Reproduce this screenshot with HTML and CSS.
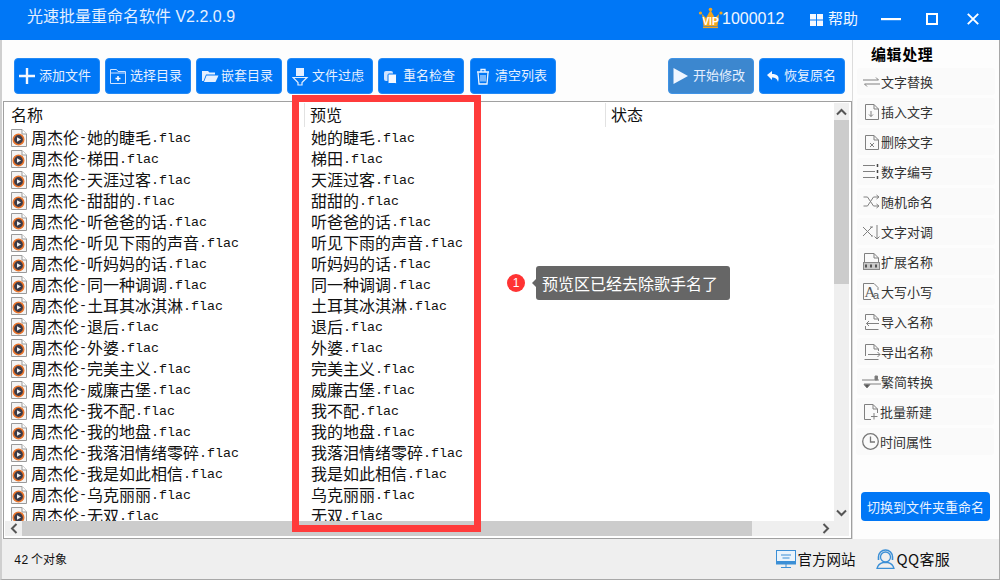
FILE: index.html
```html
<!DOCTYPE html>
<html lang="zh-CN">
<head>
<meta charset="utf-8">
<title>光速批量重命名软件</title>
<link rel="stylesheet" href="styles.css">
</head>
<body>
<svg class="defs" width="0" height="0">
  <symbol id="flac" viewBox="0 0 16 18">
    <path d="M.5.5H11L15.5 5V17.5H.5Z" fill="#f4f4f4" stroke="#9a9a9a"/>
    <path d="M11 .5V5H15.5" fill="#fff" stroke="#9a9a9a"/>
    <circle cx="7.5" cy="10.5" r="5.2" fill="#3a3a48" stroke="#e8742c" stroke-width="1.6"/>
    <path d="M6 8.2L10 10.5L6 12.8Z" fill="#f2f2f2"/>
  </symbol>
</svg>
<div class="win">
  <header class="titlebar">
    <div class="apptitle">光速批量重命名软件 V2.2.0.9</div>
    <svg class="crown" width="25" height="22" viewBox="0 0 25 22">
      <path d="M4 7L8 11L12.5 3L17 11L21 7L19.5 19H5.5Z" fill="#f2a51f"/>
      <circle cx="2.500" cy="6" r="1.600" fill="#f2a51f"/><circle cx="12.500" cy="2.500" r="1.800" fill="#f2a51f"/><circle cx="23" cy="6" r="1.600" fill="#f2a51f"/>
      <rect x="5" y="19.500" width="15" height="1.600" fill="#f2a51f"/>
      <text x="12.500" y="18" text-anchor="middle" class="viptext">VIP</text>
    </svg>
    <span class="uid">1000012</span>
    <svg class="gridicon" width="13" height="13" viewBox="0 0 13 13" fill="#f4f8ff"><rect width="6" height="5.500"/><rect x="7" width="6" height="5.500"/><rect y="6.500" width="6" height="5.500"/><rect x="7" y="6.500" width="6" height="5.500"/></svg>
    <span class="help">帮助</span>
    <svg class="winbtn minb" width="20" height="4" viewBox="0 0 20 4"><rect y="1" width="20" height="2.200" fill="#fff"/></svg>
    <svg class="winbtn maxb" width="12" height="12" viewBox="0 0 12 12"><rect x="1" y="1" width="10" height="10" fill="none" stroke="#fff" stroke-width="2"/></svg>
    <svg class="winbtn clsb" width="12" height="12" viewBox="0 0 12 12"><path d="M.8.8L11.200 11.200M11.200.8L.8 11.200" stroke="#fff" stroke-width="1.900"/></svg>
  </header>

  <div class="body">
    <div class="main">
      <div class="leftcol">
        <div class="toolbar">
          <button class="tbtn"><svg width="20" height="20" viewBox="0 0 20 20"><path d="M8 2V18M0 10H16" stroke="#f4f8ff" stroke-width="2.400"/></svg>添加文件</button>
          <button class="tbtn"><svg width="20" height="20" viewBox="0 0 20 20" fill="none" stroke="#cfe3ff"><g transform="translate(-2 0)"><path d="M2.500 17.500V3.500H8.500L10 5.500H17.500V17.500Z"/><path d="M2.500 7H17.500"/><path d="M10 10V15M7.500 12.500H12.500" stroke="#fff" stroke-width="1.500"/></g></svg>选择目录</button>
          <button class="tbtn"><svg width="20" height="20" viewBox="0 0 20 20"><g transform="translate(-1 0)"><path d="M2 5H8L9.500 6.500H15V8.500H6L3.500 15H2Z" fill="#e6f0ff"/><path d="M6.500 9.500H18.500L15.500 16H4Z" fill="#e6f0ff"/></g></svg>嵌套目录</button>
          <button class="tbtn"><svg width="20" height="20" viewBox="0 0 20 20"><g transform="translate(-2 0)"><rect x="6" y="2" width="8" height="8" fill="#e6f0ff"/><path d="M3 11.500H17L12 16.500V19H8V16.500Z" fill="none" stroke="#e6f0ff" stroke-width="1.200"/></g></svg>文件过虑</button>
          <button class="tbtn"><svg width="20" height="20" viewBox="0 0 20 20"><g transform="translate(-3 0)"><rect x="4" y="5" width="9" height="10" rx="2" fill="#cfe3ff"/><rect x="8" y="8" width="8.500" height="9.500" rx="1" fill="#f4f8ff" stroke="#0077f6"/></g></svg>重名检查</button>
          <button class="tbtn lastleft"><svg width="20" height="20" viewBox="0 0 20 20" fill="none" stroke="#f0f6ff" stroke-width="1.300"><g transform="translate(-2 0)"><path d="M4 6H16M8 6V3.500H12V6"/><path d="M5 6.500L6 18H14L15 6.500"/><path d="M8 9V15.500M10 9V15.500M12 9V15.500" stroke-width="1"/></g></svg>清空列表</button>
          <button class="tbtn startbtn"><svg width="20" height="20" viewBox="0 0 20 20"><path d="M.5 2L15 10L.5 18Z" fill="#f0f6ff"/></svg>开始修改</button>
          <button class="tbtn"><svg width="20" height="20" viewBox="0 0 20 20"><path d="M3 9L8 5V8C13 8 16 10 14 16C13 12.500 11 11.500 8 11.500V14Z" fill="#f4f8ff"/></svg>恢复原名</button>
        </div>

        <div class="list">
          <div class="listtop">
            <div class="table">
              <div class="thead">
                <div class="th thname">名称</div>
                <div class="th thprev">预览</div>
                <div class="th thstate">状态</div>
              </div>
              <div class="rows">
                <div class="row"><div class="cname"><svg class="ficon" width="16" height="18"><use href="#flac"/></svg>周杰伦<span class="hy">-</span>她的睫毛<span class="ext">.flac</span></div><div class="cprev">她的睫毛<span class="ext">.flac</span></div></div>
                <div class="row"><div class="cname"><svg class="ficon" width="16" height="18"><use href="#flac"/></svg>周杰伦<span class="hy">-</span>梯田<span class="ext">.flac</span></div><div class="cprev">梯田<span class="ext">.flac</span></div></div>
                <div class="row"><div class="cname"><svg class="ficon" width="16" height="18"><use href="#flac"/></svg>周杰伦<span class="hy">-</span>天涯过客<span class="ext">.flac</span></div><div class="cprev">天涯过客<span class="ext">.flac</span></div></div>
                <div class="row"><div class="cname"><svg class="ficon" width="16" height="18"><use href="#flac"/></svg>周杰伦<span class="hy">-</span>甜甜的<span class="ext">.flac</span></div><div class="cprev">甜甜的<span class="ext">.flac</span></div></div>
                <div class="row"><div class="cname"><svg class="ficon" width="16" height="18"><use href="#flac"/></svg>周杰伦<span class="hy">-</span>听爸爸的话<span class="ext">.flac</span></div><div class="cprev">听爸爸的话<span class="ext">.flac</span></div></div>
                <div class="row"><div class="cname"><svg class="ficon" width="16" height="18"><use href="#flac"/></svg>周杰伦<span class="hy">-</span>听见下雨的声音<span class="ext">.flac</span></div><div class="cprev">听见下雨的声音<span class="ext">.flac</span></div></div>
                <div class="row"><div class="cname"><svg class="ficon" width="16" height="18"><use href="#flac"/></svg>周杰伦<span class="hy">-</span>听妈妈的话<span class="ext">.flac</span></div><div class="cprev">听妈妈的话<span class="ext">.flac</span></div></div>
                <div class="row"><div class="cname"><svg class="ficon" width="16" height="18"><use href="#flac"/></svg>周杰伦<span class="hy">-</span>同一种调调<span class="ext">.flac</span></div><div class="cprev">同一种调调<span class="ext">.flac</span></div></div>
                <div class="row"><div class="cname"><svg class="ficon" width="16" height="18"><use href="#flac"/></svg>周杰伦<span class="hy">-</span>土耳其冰淇淋<span class="ext">.flac</span></div><div class="cprev">土耳其冰淇淋<span class="ext">.flac</span></div></div>
                <div class="row"><div class="cname"><svg class="ficon" width="16" height="18"><use href="#flac"/></svg>周杰伦<span class="hy">-</span>退后<span class="ext">.flac</span></div><div class="cprev">退后<span class="ext">.flac</span></div></div>
                <div class="row"><div class="cname"><svg class="ficon" width="16" height="18"><use href="#flac"/></svg>周杰伦<span class="hy">-</span>外婆<span class="ext">.flac</span></div><div class="cprev">外婆<span class="ext">.flac</span></div></div>
                <div class="row"><div class="cname"><svg class="ficon" width="16" height="18"><use href="#flac"/></svg>周杰伦<span class="hy">-</span>完美主义<span class="ext">.flac</span></div><div class="cprev">完美主义<span class="ext">.flac</span></div></div>
                <div class="row"><div class="cname"><svg class="ficon" width="16" height="18"><use href="#flac"/></svg>周杰伦<span class="hy">-</span>威廉古堡<span class="ext">.flac</span></div><div class="cprev">威廉古堡<span class="ext">.flac</span></div></div>
                <div class="row"><div class="cname"><svg class="ficon" width="16" height="18"><use href="#flac"/></svg>周杰伦<span class="hy">-</span>我不配<span class="ext">.flac</span></div><div class="cprev">我不配<span class="ext">.flac</span></div></div>
                <div class="row"><div class="cname"><svg class="ficon" width="16" height="18"><use href="#flac"/></svg>周杰伦<span class="hy">-</span>我的地盘<span class="ext">.flac</span></div><div class="cprev">我的地盘<span class="ext">.flac</span></div></div>
                <div class="row"><div class="cname"><svg class="ficon" width="16" height="18"><use href="#flac"/></svg>周杰伦<span class="hy">-</span>我落泪情绪零碎<span class="ext">.flac</span></div><div class="cprev">我落泪情绪零碎<span class="ext">.flac</span></div></div>
                <div class="row"><div class="cname"><svg class="ficon" width="16" height="18"><use href="#flac"/></svg>周杰伦<span class="hy">-</span>我是如此相信<span class="ext">.flac</span></div><div class="cprev">我是如此相信<span class="ext">.flac</span></div></div>
                <div class="row"><div class="cname"><svg class="ficon" width="16" height="18"><use href="#flac"/></svg>周杰伦<span class="hy">-</span>乌克丽丽<span class="ext">.flac</span></div><div class="cprev">乌克丽丽<span class="ext">.flac</span></div></div>
                <div class="row"><div class="cname"><svg class="ficon" width="16" height="18"><use href="#flac"/></svg>周杰伦<span class="hy">-</span>无双<span class="ext">.flac</span></div><div class="cprev">无双<span class="ext">.flac</span></div></div>
              </div>
            </div>
            <div class="vbar">
              <div class="sbtn"><svg width="11" height="8" viewBox="0 0 11 8"><path d="M1 6.500L5.500 2L10 6.500" fill="none" stroke="#555" stroke-width="2"/></svg></div>
              <div class="vthumb"></div>
              <div class="vtrack"></div>
              <div class="sbtn"><svg width="11" height="8" viewBox="0 0 11 8"><path d="M1 1.500L5.500 6L10 1.500" fill="none" stroke="#555" stroke-width="2"/></svg></div>
            </div>
          </div>
          <div class="hbar">
            <div class="hbtn"><svg width="8" height="11" viewBox="0 0 8 11"><path d="M6.500 1L2 5.500L6.500 10" fill="none" stroke="#555" stroke-width="2"/></svg></div>
            <div class="hthumb"></div>
            <div class="htrack"></div>
            <div class="hbtn"><svg width="8" height="11" viewBox="0 0 8 11"><path d="M1.500 1L6 5.500L1.500 10" fill="none" stroke="#555" stroke-width="2"/></svg></div>
            <div class="hcorner"></div>
          </div>
        </div>
      </div>

      <aside class="side">
        <div class="sidetitle">编辑处理</div>
        <div class="sitem"><svg width="19" height="19" viewBox="0 0 19 19" class="sic"><path d="M1 8H16.500L14 5.500M18 12H2.500L5 14.500" /></svg>文字替换</div>
        <div class="sitem"><svg width="19" height="19" viewBox="0 0 19 19" class="sic"><path d="M3.500 2.500H12L16.500 7V17.500H3.500Z"/><path d="M12 2.500V7H16.500"/><path d="M9 9V14.500M7 12.500L9 14.500L11 12.500"/></svg>插入文字</div>
        <div class="sitem"><svg width="19" height="19" viewBox="0 0 19 19" class="sic"><path d="M3.500 3.500H12L16.500 8V17.500H3.500Z"/><path d="M12 3.500V8H16.500"/><path d="M8 11L12 15M12 11L8 15"/></svg>删除文字</div>
        <div class="sitem"><svg width="19" height="19" viewBox="0 0 19 19" class="sic"><path d="M1 3.500H13M1 9.500H13M1 15.500H13"/><path d="M15.500 2V5M15.500 8V11M15.500 14V17" stroke="#444" stroke-width="1.500"/></svg>数字编号</div>
        <div class="sitem"><svg width="19" height="19" viewBox="0 0 19 19" class="sic"><path d="M1.500 5H5.500L11.500 14H16.500M1.500 14H5.500L11.500 5H16.500"/><path d="M14.500 3L17 5L14.500 7M14.500 12L17 14L14.500 16"/></svg>随机命名</div>
        <div class="sitem"><svg width="19" height="19" viewBox="0 0 19 19" class="sic"><path d="M1 5L10 14M1 14L10 5"/><path d="M8 5H11M9 14H11"/><path d="M15 3V17M12.500 14.500L15 17L17.500 14.500"/></svg>文字对调</div>
        <div class="sitem"><svg width="19" height="19" viewBox="0 0 19 19" class="sic"><path d="M2.500 1.500H12L16.500 6V17.500H2.500Z"/><path d="M12 1.500V6H16.500"/><rect x="1.500" y="10.500" width="16" height="7" fill="#c9c9c9" stroke="#888"/><path d="M4 12.500V15.500M9 12.500V15.500M14 12.500V15.500" stroke="#555" stroke-width="2"/></svg>扩展名称</div>
        <div class="sitem"><svg width="19" height="19" viewBox="0 0 19 19" class="sic"><path d="M1.500 1.500H12L16 5.500V8M1.500 1.500V17.500H9"/><text x="2.500" y="15" class="aa1">A</text><text x="11" y="17" class="aa2">a</text></svg>大写小写</div>
        <div class="sitem"><svg width="19" height="19" viewBox="0 0 19 19" class="sic"><path d="M3.500 8V2.500H12L16.500 7V9M3.500 14V17.500H16.500"/><path d="M12 2.500V7H16.500"/><path d="M17 11.500H4.500M7 9L4.500 11.500L7 14"/></svg>导入名称</div>
        <div class="sitem"><svg width="19" height="19" viewBox="0 0 19 19" class="sic"><path d="M3.500 14V2.500H12L16.500 7V9M2.500 17.500H16.500"/><path d="M12 2.500V7H16.500"/><path d="M6 12.500H18M15.500 10L18 12.500L15.500 15"/></svg>导出名称</div>
        <div class="sitem"><svg width="19" height="19" viewBox="0 0 19 19" class="sic"><path d="M0 8H17M19 12H2"/><path d="M13 4H15.500V8H13Z" fill="#777"/><path d="M2 12.500H8L5 16Z" fill="#555"/></svg>繁简转换</div>
        <div class="sitem shift"><svg width="19" height="19" viewBox="0 0 19 19" class="sic"><path d="M3.500 17.500V2.500H12L16.500 7V11M3.500 17.500H10"/><path d="M12 2.500V7H16.500"/><path d="M13 11V17.500M10 14.500H16.500"/></svg>批量新建</div>
        <div class="sitem shift"><svg width="19" height="19" viewBox="0 0 19 19" class="sic clock"><circle cx="9.500" cy="9.500" r="7.800"/><path d="M9.500 4.500V10H14"/></svg>时间属性</div>
        <button class="switchbtn">切换到文件夹重命名</button>
      </aside>
    </div>

    <footer class="status">
      <span class="count"><span class="cnum">42</span> 个对象</span>
      <div class="links">
        <svg width="20" height="20" viewBox="0 0 20 20" fill="none" stroke="#3b8fd6"><rect x=".5" y="1.500" width="19" height="13.500" fill="#eaf4fc"/><rect x="1" y="12" width="18" height="3" fill="#3b8fd6" stroke="none"/><path d="M5 6H15M6.500 9H13.500M10 15V18M5 18.500H15"/></svg>
        <span class="lnk site">官方网站</span>
        <svg class="qqic" width="21" height="20" viewBox="0 0 21 20" fill="none" stroke="#3b8fd6" stroke-width="1.300"><circle cx="10.500" cy="8" r="5"/><path d="M3.500 11V8A7 7 0 0 1 17.500 8V11" stroke-width="1.600"/><path d="M2 19.500C3 15.500 6 14 8 13.500H13C15 14 18 15.500 19 19.500Z"/></svg>
        <span class="lnk qq">QQ客服</span>
      </div>
    </footer>
  </div>

  <div class="redbox"></div>
  <div class="badge">1</div>
  <div class="tip">预览区已经去除歌手名了</div>
</div>
</body>
</html>
```

FILE: styles.css
```css
* { box-sizing: border-box; }
html, body { margin: 0; padding: 0; }
body { font-family: "Noto Sans CJK SC", "Liberation Sans", sans-serif; background: #fff; }
.defs { position: absolute; }

.win { position: relative; width: 1000px; height: 580px; display: flex; flex-direction: column; overflow: hidden; background: #fdfdfd; }

.titlebar { height: 40px; flex: none; background: #0077f6; color: #f0f6ff; display: flex; align-items: center; padding-bottom: 6px; }
.apptitle { margin-left: 27px; font-size: 16px; line-height: 22px; width: 671px; color: #e4efff; font-family: "Liberation Sans", "Noto Sans CJK SC", sans-serif; }
.crown { flex: none; margin-bottom: -2px; }
.viptext { font: bold 10px "Liberation Sans", sans-serif; fill: #fff; }
.uid { font: 16px/20px "Liberation Sans", sans-serif; width: 62px; margin-left: -1px; margin-top: 3px; }
.gridicon { margin-left: 26px; margin-top: 6px; flex: none; }
.help { font-size: 15px; line-height: 20px; margin-left: 5px; width: 30px; margin-top: 1px; white-space: nowrap; }
.winbtn { flex: none; }
.minb { margin-left: 23px; margin-top: 4px; }
.maxb { margin-left: 25px; margin-top: 4px; }
.clsb { margin-left: 29px; margin-top: 4px; }

.body { flex: 1; min-height: 0; display: flex; flex-direction: column; border-left: 2px solid #cfcfcf; border-right: 1px solid #a8a8a8; border-bottom: 1px solid #a8a8a8; }
.main { flex: 1; min-height: 0; display: flex; }
.leftcol { width: 850px; flex: none; display: flex; flex-direction: column; }

.toolbar { height: 61px; flex: none; display: flex; gap: 5px; padding: 18px 7px 7px 12px; }
.tbtn { width: 86px; height: 36px; flex: none; display: flex; align-items: center; padding: 0 0 2px 4px; border: 1px solid #2389f5; border-radius: 4px; background: #0077f6; color: #e6f0ff; font: 13px/18px "Noto Sans CJK SC", sans-serif; white-space: nowrap; }
.tbtn svg { flex: none; margin-top: 2px; }
.lastleft { margin-left: 1px; }
.startbtn { margin-left: auto; background: #3c87cf; border-color: #3f93e6; }

.list { flex: 1; min-height: 0; margin-left: 1px; padding: 1px 2px 2px 1px; border: 1px solid #a0a0a0; background: #fff; display: flex; flex-direction: column; }
.listtop { flex: 1; min-height: 0; display: flex; }
.table { flex: 1; min-width: 0; overflow: hidden; }
.thead { height: 24px; display: flex; font-size: 16px; line-height: 22px; color: #111; }
.th { height: 24px; padding-left: 6px; white-space: nowrap; }
.thname { width: 299px; }
.thprev { width: 301px; padding-left: 5px; border-left: 1px solid #e2e2e2; }
.thstate { padding-left: 5px; border-left: 1px solid #e2e2e2; }
.rows { overflow: hidden; }
.row { height: 21px; display: flex; font-size: 16px; line-height: 21px; color: #111; white-space: nowrap; }
.cname { width: 299px; padding-left: 6px; display: flex; align-items: center; }
.cprev { padding-left: 7px; display: flex; align-items: center; }
.ficon { flex: none; margin-right: 4px; }
.ext, .hy { font-family: "Liberation Mono", monospace; font-size: 13.33px; }
.ext { margin-top: 1px; }

.vbar { width: 15px; flex: none; background: #efefef; display: flex; flex-direction: column; }
.sbtn { height: 17px; flex: none; display: flex; align-items: center; justify-content: center; }
.vthumb { height: 164px; flex: none; background: #cccccc; }
.vtrack { flex: 1; }
.hbar { height: 15px; flex: none; background: #efefef; display: flex; }
.hbtn { width: 17px; flex: none; display: flex; align-items: center; justify-content: center; }
.hthumb { width: 730px; flex: none; background: #cccccc; }
.htrack { flex: 1; }
.hcorner { width: 15px; flex: none; }

.side { flex: 1; min-width: 0; border-left: 1px solid #dcdcdc; display: flex; flex-direction: column; padding: 0 4px 0 4px; }
.sidetitle { height: 25px; margin-bottom: 3px; padding-left: 14px; font-size: 15px; font-weight: 700; letter-spacing: 0.6px; line-height: 28px; color: #000; }
.sitem { height: 27px; margin-bottom: 3px; flex: none; width: 138px; display: flex; align-items: center; padding-left: 5px; background: #fafafa; border-radius: 3px; font-size: 13px; line-height: 18px; color: #333; }
.sitem.shift { margin-left: -1px; }
.sic { flex: none; fill: none; stroke: #808080; stroke-width: 1; }
.clock { stroke: #777; stroke-width: 1.300; }
.aa1 { font: 15px "Liberation Serif", serif; fill: #555; stroke: none; }
.aa2 { font: 11px "Liberation Sans", sans-serif; fill: #555; stroke: none; }
.switchbtn { width: 129px; height: 29px; flex: none; margin: 34px 0 0 4px; padding: 0; border: 0; border-radius: 4px; background: #0077f6; color: #e9f2ff; font: 13px/18px "Noto Sans CJK SC", sans-serif; white-space: nowrap; }

.status { height: 40px; flex: none; background: #efefef; display: flex; align-items: center; padding: 0 49px 0 12px; color: #111; }
.count { font-size: 12px; line-height: 16px; margin-top: 2px; }
.cnum { font-family: "Liberation Mono", monospace; }
.links { margin-left: auto; display: flex; align-items: center; }
.lnk { font-size: 15px; line-height: 20px; margin-left: 1px; white-space: nowrap; }
.site { font-size: 14.500px; margin-left: 2px; }
.qq { letter-spacing: 0.3px; }
.qqic { margin-left: 19px; }

.redbox { position: absolute; left: 292px; top: 95px; width: 189px; height: 437px; border: 7px solid #ff3b3b; }
.badge { position: absolute; left: 507px; top: 274px; width: 18px; height: 18px; border-radius: 50%; background: #ff3333; color: #fff; font: 12px/18px "Liberation Sans", sans-serif; text-align: center; }
.tip { position: absolute; left: 536px; top: 266px; width: 194px; height: 34px; padding-left: 6px; background: #666; border-radius: 3px; color: #fff; font-size: 16px; line-height: 34px; white-space: nowrap; }
.tip::before { content: ""; position: absolute; left: -4px; top: 13px; border-style: solid; border-width: 4px 4px 4px 0; border-color: transparent #666 transparent transparent; }
```
